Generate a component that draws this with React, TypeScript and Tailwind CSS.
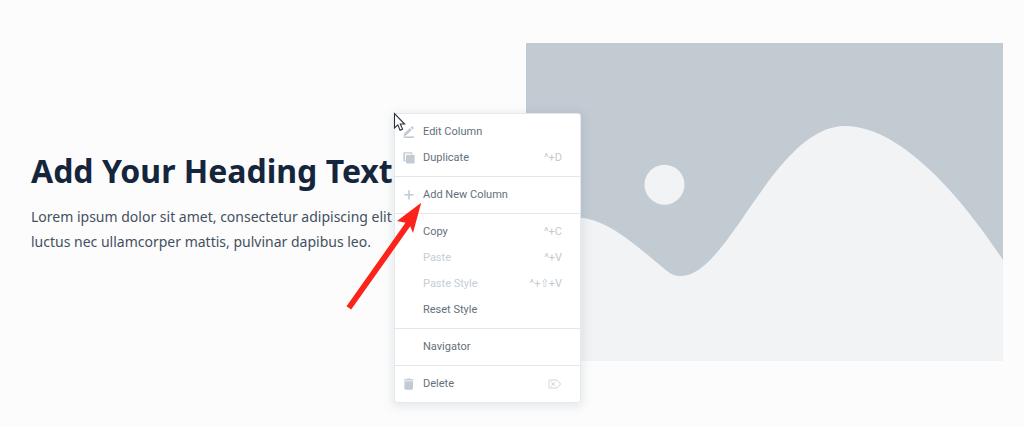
import type { ReactNode } from "react";

type Item = {
  label: string;
  icon?: ReactNode;
  shortcut?: ReactNode;
  disabled?: boolean;
};

const PencilIcon = () => (
  <svg viewBox="0 0 12 12" className="size-3" fill="#c2cad3" aria-hidden="true">
    <path d="M0.5 9.9 L1 7.5 L6.8 2.1 L8.8 4.1 L3.1 9.5 Z M7.6 1.4 L8.6 0.5 Q9.2 0 9.8 0.6 L10.4 1.2 Q11 1.8 10.4 2.5 L9.5 3.4 Z" />
    <rect x="0.5" y="10.4" width="10.5" height="1.6" />
  </svg>
);

const DuplicateIcon = () => (
  <svg viewBox="0 0 12 12" className="size-3" fill="#c2cad3" aria-hidden="true">
    <path d="M1.3 0.2 H8.2 Q9.4 0.2 9.4 1.4 V2.3 H8 V1.6 H1.9 V8 H2.5 V9.4 H1.5 Q0.3 9.4 0.3 8.2 V1.4 Q0.3 0.2 1.3 0.2 Z" />
    <rect x="3" y="2.8" width="8.6" height="8.8" rx="1" />
  </svg>
);

const PlusIcon = () => (
  <svg viewBox="0 0 12 12" className="size-3" fill="#c2cad3" aria-hidden="true">
    <path d="M5.2 1.2 H6.8 V5 H10.6 V6.6 H6.8 V10.4 H5.2 V6.6 H1.4 V5 H5.2 Z" />
  </svg>
);

const TrashIcon = () => (
  <svg viewBox="0 0 12 12" className="size-3" fill="#c2cad3" aria-hidden="true">
    <path d="M1 1.2 H3.6 L4.2 0.5 H7.2 L7.8 1.2 H10.4 V2.4 H1 Z M1.4 3.2 H10 V10.6 Q10 11.7 8.9 11.7 H2.5 Q1.4 11.7 1.4 10.6 Z" />
  </svg>
);

const DeleteKeyIcon = () => (
  <svg viewBox="0 0 14 10" className="h-[10px] w-[14px]" fill="none" stroke="#ced5dc" aria-hidden="true">
    <path d="M1 1 H9 L12.6 5 L9 9 H1 Z M3 2.8 L7.4 7.2 M7.4 2.8 L3 7.2" />
  </svg>
);

const groups: Item[][] = [
  [
    { label: "Edit Column", icon: <PencilIcon /> },
    { label: "Duplicate", icon: <DuplicateIcon />, shortcut: "^+D" },
  ],
  [{ label: "Add New Column", icon: <PlusIcon /> }],
  [
    { label: "Copy", shortcut: "^+C" },
    { label: "Paste", shortcut: "^+V", disabled: true },
    { label: "Paste Style", shortcut: "^+⇧+V", disabled: true },
    { label: "Reset Style" },
  ],
  [{ label: "Navigator" }],
  [{ label: "Delete", icon: <TrashIcon />, shortcut: <DeleteKeyIcon /> }],
];

function MenuItem({ label, icon, shortcut, disabled }: Item) {
  return (
    <button
      type="button"
      role="menuitem"
      disabled={disabled}
      className="flex h-[26px] w-full items-center pr-[18px] pl-2 text-left text-[#63707c] disabled:text-[#c6cdd5]"
    >
      <span className="flex w-5 shrink-0">{icon}</span>
      <span className="flex-1">{label}</span>
      <span className="text-[#c2cad2]">{shortcut}</span>
    </button>
  );
}

function ContextMenu() {
  return (
    <div
      role="menu"
      aria-label="Column"
      className="absolute top-[113px] left-[394px] w-[187px] rounded-[3px] border border-[#e6e9ec] bg-white font-[Roboto,'DejaVu_Sans_Condensed',sans-serif] text-[11px] shadow-[0_2px_10px_2px_rgba(100,120,150,0.15)]"
    >
      {groups.map((items, i) => (
        <div key={i} role="group" className="border-t border-[#e3e7eb] py-[5px] first:border-t-0">
          {items.map((item) => (
            <MenuItem key={item.label} {...item} />
          ))}
        </div>
      ))}
    </div>
  );
}

function PlaceholderImage() {
  return (
    <svg viewBox="0 0 477 318" className="block w-full" role="img" aria-label="Placeholder">
      <rect width="477" height="318" fill="#c2cad2" />
      <path
        d="M0 204 C20 186 36 174 56 175 C84 178 112 204 141 228 C146 232 150 233 155 233 C203 233 248 83 319 83 C373 83 433 150 477 217 V318 H0 Z"
        fill="#f1f3f5"
      />
      <circle cx="138.5" cy="141.7" r="20" fill="#f1f3f5" />
    </svg>
  );
}

export default function App() {
  return (
    <main className="relative min-h-screen overflow-hidden bg-[#fcfcfc]">
      <section className="grid grid-cols-2 items-center gap-[18px] pt-[43px] pr-[21px] pl-[31px]">
        <div className="font-['Noto_Sans','Open_Sans',sans-serif]">
          <h1 className="text-[32px] leading-10 font-bold whitespace-nowrap text-[#15263c]">
            Add Your Heading Text
          </h1>
          <p className="mt-[13px] text-sm leading-[25px] whitespace-nowrap text-[#435060]">
            Lorem ipsum dolor sit amet, consectetur adipiscing elit
            <br />
            luctus nec ullamcorper mattis, pulvinar dapibus leo.
          </p>
        </div>
        <PlaceholderImage />
      </section>

      <ContextMenu />

      <svg
        viewBox="0 0 80 112"
        className="pointer-events-none absolute top-[200px] left-[344px] h-[112px] w-[80px]"
        aria-hidden="true"
      >
        <path
          d="M77.2 2.8 L53 21 L61.5 22.8 L2.5 106.3 L7.2 109.6 L66.2 26.3 L69 33 Z"
          fill="#fb241b"
        />
      </svg>
      <svg
        viewBox="0 0 13 20"
        className="pointer-events-none absolute top-[112px] left-[393px] h-5 w-[13px]"
        aria-hidden="true"
      >
        <path
          d="M1.5 1.5 V16 L4.8 12.9 L7.1 18.2 L9.6 17.1 L7.3 12 H11.6 Z"
          fill="#ffffff"
          stroke="#2a2d3c"
          strokeWidth="1.1"
        />
      </svg>
    </main>
  );
}
